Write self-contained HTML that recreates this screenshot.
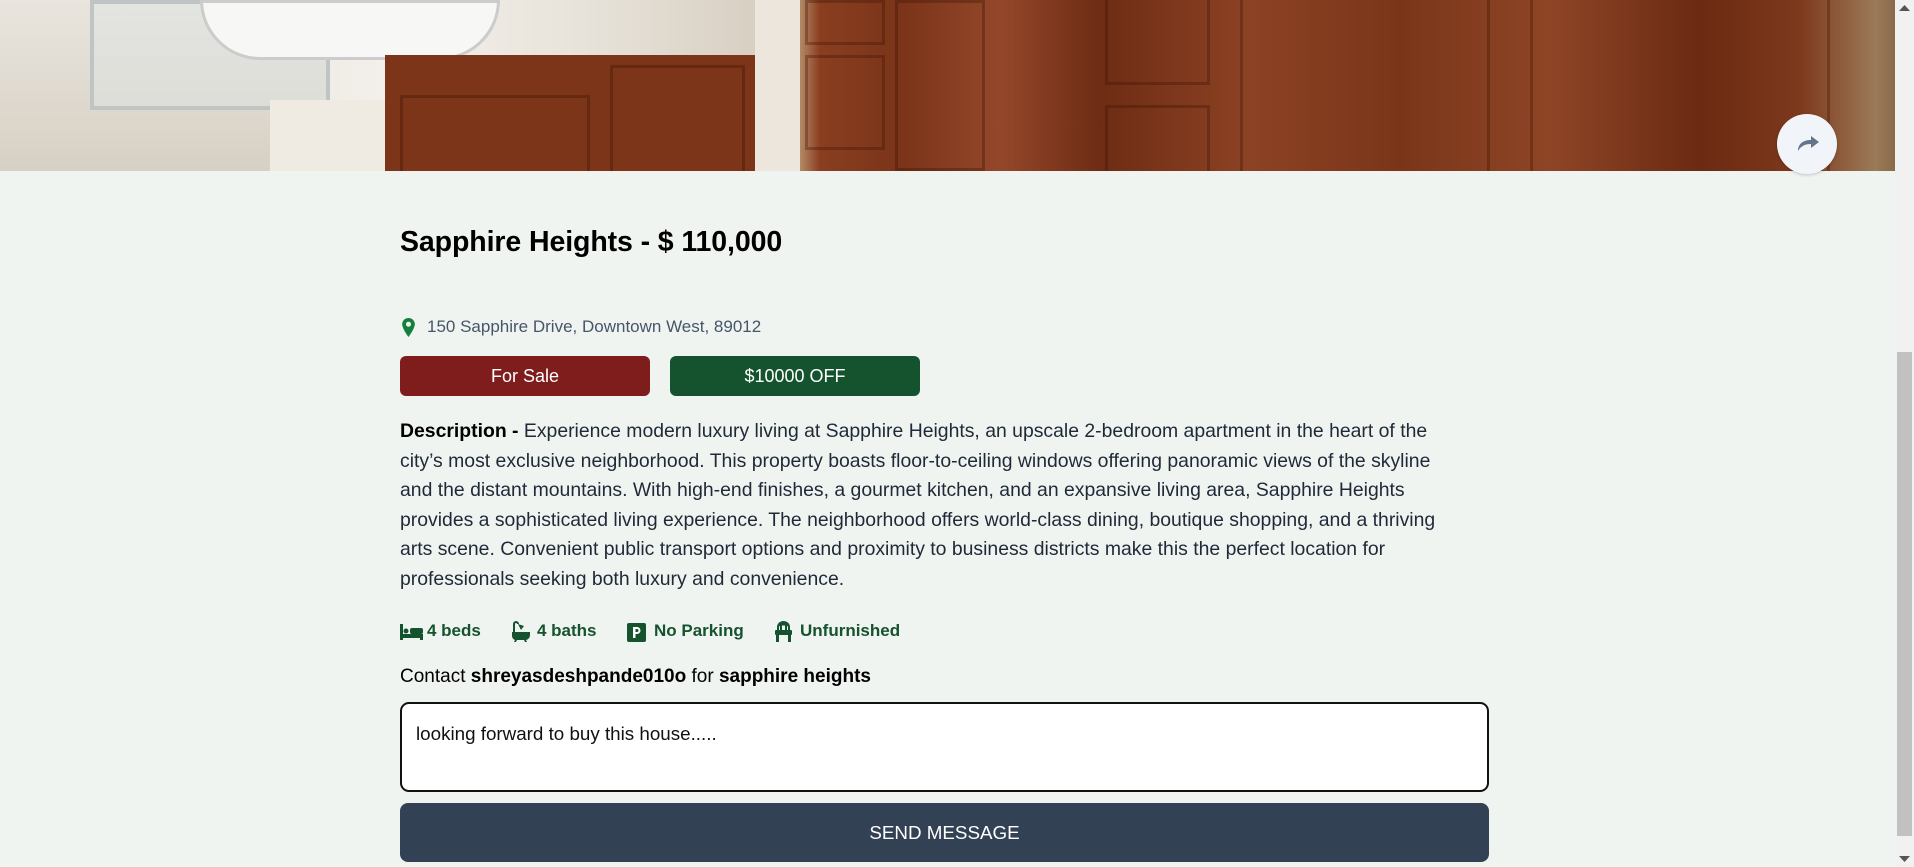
<!DOCTYPE html>
<html><head><meta charset="utf-8"><style>
*{box-sizing:border-box;margin:0;padding:0}
html,body{width:1914px;height:867px;overflow:hidden;background:#f0f4f1;font-family:"Segoe UI","Liberation Sans",sans-serif;color:#1f2937}
.hero{position:absolute;left:0;top:0;width:1895px;height:171px;overflow:hidden;
background:linear-gradient(90deg,#d9d2c6 0,#e8e3da 80px,#cfc8bc 180px,#ece8e2 260px,#f4f1ec 400px,#e6e1d8 600px,#d8cfc2 760px,#b38a66 800px,#8a3e20 820px,#7a3419 900px,#94472a 1000px,#6e2c14 1100px,#8c4224 1250px,#7a3519 1400px,#8e4526 1550px,#6b2a12 1700px,#7d391c 1800px,#9b7a58 1875px,#8a6a4a 1895px)}
.p{position:absolute;border:3px solid rgba(60,20,5,.35)}
.sb{position:absolute;right:0;top:0;width:19px;height:867px;background:#f1f1f1}
.th{position:absolute;right:2px;top:352px;width:15px;height:484px;background:#c1c1c1}
.share{position:absolute;left:1777px;top:114px;width:60px;height:60px;border-radius:50%;background:#f1f5f9;box-shadow:0 1px 3px rgba(0,0,0,.2)}
.c{position:absolute;left:400px;width:1089px}
h1{font-size:28.5px;font-weight:700;color:#000;top:226px;position:absolute;left:400px;letter-spacing:-.1px}
.addr{top:317px;font-size:17px;color:#475569}
.badge{position:absolute;top:356px;height:40px;width:250px;border-radius:6px;color:#fff;font-size:18px;display:flex;align-items:center;justify-content:center}
.desc{top:417px;font-size:19.4px;line-height:29.5px;color:#1f2937;white-space:nowrap}
.am{top:621px;font-size:17px;color:#14532d;font-weight:600;height:24px}
.am span{position:absolute;top:0}
.am svg{position:absolute;top:2px}
.ct{top:666px;font-size:19px;color:#000}
.ta{top:702px;height:90px;background:#fff;border:2px solid #111;border-radius:9px;font-size:18.8px;padding:19px 14px;color:#111}
.btn{top:803px;height:59px;background:#334155;border-radius:8px;color:#fff;font-size:18.8px;display:flex;align-items:center;justify-content:center}
</style></head><body>
<div class="hero">
 <div style="position:absolute;left:0;top:0;width:330px;height:171px;background:linear-gradient(180deg,#e9e5de,#d7d0c4)"></div>
 <div style="position:absolute;left:90px;top:0;width:240px;height:110px;border:4px solid #bfc4c4;background:rgba(220,230,230,.4)"></div>
 <div style="position:absolute;left:200px;top:0;width:300px;height:60px;border-radius:0 0 150px 150px;background:#f7f7f5;border:3px solid #ccc"></div>
 <div style="position:absolute;left:270px;top:100px;width:490px;height:71px;background:#efeae2"></div>
 <div style="position:absolute;left:385px;top:55px;width:370px;height:116px;background:#7c3518"></div>
 <div class="p" style="left:400px;top:95px;width:190px;height:80px"></div>
 <div class="p" style="left:610px;top:65px;width:135px;height:110px"></div>
 <div style="position:absolute;left:755px;top:0;width:45px;height:171px;background:#ece6dc"></div>
 <div class="p" style="left:805px;top:0;width:80px;height:45px"></div>
 <div class="p" style="left:805px;top:55px;width:80px;height:95px"></div>
 <div class="p" style="left:895px;top:0;width:90px;height:171px"></div>
 <div class="p" style="left:1105px;top:-5px;width:105px;height:90px"></div>
 <div class="p" style="left:1105px;top:105px;width:105px;height:80px"></div>
 <div class="p" style="left:1240px;top:-5px;width:250px;height:190px"></div>
 <div class="p" style="left:1530px;top:-5px;width:300px;height:190px"></div>
</div>
<div class="share"><svg width="60" height="60" viewBox="0 0 60 60"><path d="M21 37c0-7 5-11 13-11v-4l8 6-8 6v-4c-6 0-10 2-13 7z" fill="#64748b"/></svg></div>
<div class="sb"><div class="th"></div>
<svg style="position:absolute;top:5px;left:4px" width="11" height="6"><path d="M0 6L5.5 0 11 6z" fill="#555"/></svg>
<svg style="position:absolute;bottom:5px;left:4px" width="11" height="6"><path d="M0 0L5.5 6 11 0z" fill="#555"/></svg></div>

<h1>Sapphire Heights - $ 110,000</h1>
<div class="c addr"><svg style="position:absolute;left:2px;top:1px" width="13" height="19" viewBox="0 0 12 18"><path d="M6 0C2.7 0 0 2.6 0 5.9 0 10 6 18 6 18s6-8 6-12.1C12 2.6 9.3 0 6 0zm0 8.3a2.4 2.4 0 110-4.8 2.4 2.4 0 010 4.8z" fill="#15803d"/></svg><span style="position:absolute;left:27px;top:0">150 Sapphire Drive, Downtown West, 89012</span></div>
<div class="badge" style="left:400px;background:#7f1d1d">For Sale</div>
<div class="badge" style="left:670px;background:#14532d">$10000 OFF</div>
<div class="c desc"><b style="color:#000">Description - </b>Experience modern luxury living at Sapphire Heights, an upscale 2-bedroom apartment in the heart of the<br>city’s most exclusive neighborhood. This property boasts floor-to-ceiling windows offering panoramic views of the skyline<br>and the distant mountains. With high-end finishes, a gourmet kitchen, and an expansive living area, Sapphire Heights<br>provides a sophisticated living experience. The neighborhood offers world-class dining, boutique shopping, and a thriving<br>arts scene. Convenient public transport options and proximity to business districts make this the perfect location for<br>professionals seeking both luxury and convenience.</div>
<div class="c am">
 <svg style="left:0" width="23" height="18" viewBox="0 0 23 18"><rect x="0" y="1" width="3" height="16" fill="#14532d"/><rect x="0" y="11" width="23" height="4" fill="#14532d"/><rect x="20" y="11" width="3" height="6" fill="#14532d"/><rect x="10" y="5" width="13" height="6" rx="2" fill="#14532d"/><circle cx="6" cy="8" r="2.5" fill="#14532d"/></svg>
 <span style="left:27px">4 beds</span>
 <svg style="left:110px;top:0" width="22" height="22" viewBox="0 0 22 22"><path d="M2 11h18v3a5 5 0 01-4 5l1 2h-2l-1-2H7l-1 2H4l1-2a5 5 0 01-3-5z" fill="#14532d"/><path d="M4 11V3a2 2 0 014 0" stroke="#14532d" stroke-width="2" fill="none"/><path d="M8 3l6 2-3 4z" fill="#14532d"/></svg>
 <span style="left:137px">4 baths</span>
 <svg style="left:227px" width="19" height="19" viewBox="0 0 19 19"><rect width="19" height="19" rx="2" fill="#14532d"/><path d="M6 15V4h4a3.5 3.5 0 010 7H8.5v4z" fill="#fff"/><path d="M8.5 6v3H10a1.5 1.5 0 000-3z" fill="#14532d"/></svg>
 <span style="left:254px">No Parking</span>
 <svg style="left:374px;top:0" width="19" height="22" viewBox="0 0 19 22"><path d="M3 9V6a6.5 6 0 0113 0v3h-2V6a1 1 0 00-1-1V9h-2V4.5h-3V9H6V5a1 1 0 00-1 1v3z" fill="#14532d"/><rect x="1" y="9" width="17" height="5" rx="1" fill="#14532d"/><rect x="2" y="14" width="3" height="7" fill="#14532d"/><rect x="14" y="14" width="3" height="7" fill="#14532d"/></svg>
 <span style="left:400px">Unfurnished</span>
</div>
<div class="c ct">Contact <b>shreyasdeshpande010o</b> for <b>sapphire heights</b></div>
<div class="c ta">looking forward to buy this house.....</div>
<div class="c btn">SEND MESSAGE</div>
</body></html>
